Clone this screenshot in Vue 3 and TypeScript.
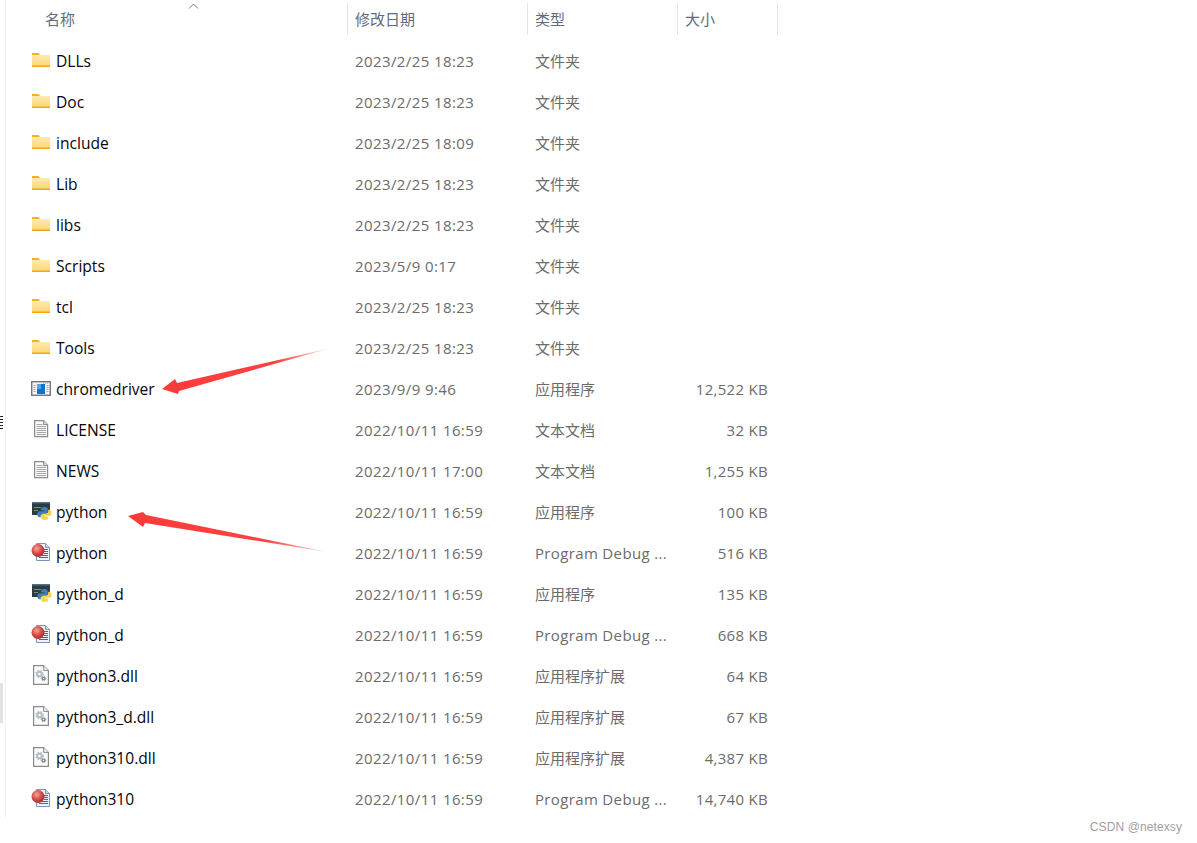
<script setup lang="ts">
type Kind = 'folder' | 'exe' | 'text' | 'py' | 'pdb' | 'dll'
interface Row { name: string; date: string; type: string; size: string; kind: Kind }

const folder = '文件夹'
const app = '应用程序'
const doc = '文本文档'
const pdb = 'Program Debug ...'
const ext = '应用程序扩展'

const rows: Row[] = [
  { name: 'DLLs', date: '2023/2/25 18:23', type: folder, size: '', kind: 'folder' },
  { name: 'Doc', date: '2023/2/25 18:23', type: folder, size: '', kind: 'folder' },
  { name: 'include', date: '2023/2/25 18:09', type: folder, size: '', kind: 'folder' },
  { name: 'Lib', date: '2023/2/25 18:23', type: folder, size: '', kind: 'folder' },
  { name: 'libs', date: '2023/2/25 18:23', type: folder, size: '', kind: 'folder' },
  { name: 'Scripts', date: '2023/5/9 0:17', type: folder, size: '', kind: 'folder' },
  { name: 'tcl', date: '2023/2/25 18:23', type: folder, size: '', kind: 'folder' },
  { name: 'Tools', date: '2023/2/25 18:23', type: folder, size: '', kind: 'folder' },
  { name: 'chromedriver', date: '2023/9/9 9:46', type: app, size: '12,522 KB', kind: 'exe' },
  { name: 'LICENSE', date: '2022/10/11 16:59', type: doc, size: '32 KB', kind: 'text' },
  { name: 'NEWS', date: '2022/10/11 17:00', type: doc, size: '1,255 KB', kind: 'text' },
  { name: 'python', date: '2022/10/11 16:59', type: app, size: '100 KB', kind: 'py' },
  { name: 'python', date: '2022/10/11 16:59', type: pdb, size: '516 KB', kind: 'pdb' },
  { name: 'python_d', date: '2022/10/11 16:59', type: app, size: '135 KB', kind: 'py' },
  { name: 'python_d', date: '2022/10/11 16:59', type: pdb, size: '668 KB', kind: 'pdb' },
  { name: 'python3.dll', date: '2022/10/11 16:59', type: ext, size: '64 KB', kind: 'dll' },
  { name: 'python3_d.dll', date: '2022/10/11 16:59', type: ext, size: '67 KB', kind: 'dll' },
  { name: 'python310.dll', date: '2022/10/11 16:59', type: ext, size: '4,387 KB', kind: 'dll' },
  { name: 'python310', date: '2022/10/11 16:59', type: pdb, size: '14,740 KB', kind: 'pdb' },
]
</script>

<template>
  <div class="page">
    <svg width="0" height="0" class="defs">
      <defs>
        <linearGradient id="fold" x1="0" y1="0" x2="0" y2="1">
          <stop offset="0" stop-color="#ffeab0" />
          <stop offset="1" stop-color="#fcd66f" />
        </linearGradient>
        <radialGradient id="ball" cx="0.4" cy="0.35" r="0.7">
          <stop offset="0" stop-color="#f2a59c" />
          <stop offset="0.55" stop-color="#d64a44" />
          <stop offset="1" stop-color="#a32a26" />
        </radialGradient>
        <linearGradient id="a1" x1="162" y1="389" x2="327" y2="349" gradientUnits="userSpaceOnUse">
          <stop offset="0" stop-color="#fb3a3a" />
          <stop offset="0.7" stop-color="#fb4343" />
          <stop offset="1" stop-color="#fdd0d0" />
        </linearGradient>
        <linearGradient id="a2" x1="128" y1="516" x2="327" y2="552" gradientUnits="userSpaceOnUse">
          <stop offset="0" stop-color="#fb3a3a" />
          <stop offset="0.7" stop-color="#fb4343" />
          <stop offset="1" stop-color="#fdd0d0" />
        </linearGradient>
      </defs>
    </svg>

    <div class="pane">
      <div class="head">
        <div class="hcell hname">名称
          <svg class="sort" width="11" height="6" viewBox="0 0 11 6"><path d="M1 5.5 L5.5 1 L10 5.5" fill="none" stroke="#7a7a7a" stroke-width="1" /></svg>
        </div>
        <div class="hcell hdate">修改日期</div>
        <div class="hcell htype">类型</div>
        <div class="hcell hsize">大小</div>
      </div>

      <div v-for="(r, i) in rows" :key="i" class="row">
        <div class="name">
          <svg class="icon" width="22" height="22" viewBox="0 0 22 22">
            <template v-if="r.kind === 'folder'">
              <path d="M2 4 h6.500 l1.500 2 h-8 z" fill="#f6b01a" />
              <rect x="2" y="6" width="18" height="12" fill="url(#fold)" />
              <rect x="2" y="16.500" width="18" height="1.500" fill="#efa918" />
            </template>
            <template v-else-if="r.kind === 'exe'">
              <rect x="1.700" y="4.700" width="18.600" height="13.600" fill="#f4f4f4" stroke="#767676" stroke-width="1.400" />
              <path d="M13 6 h6" stroke="#9a9a9a" stroke-width="1" stroke-dasharray="1 1" />
              <rect x="7" y="7" width="8" height="10" fill="#0c74cf" />
              <rect x="7" y="7" width="4" height="5" fill="#4aa8ee" />
              <path d="M3.500 8.500 h2 M3.500 10.500 h2 M3.500 12.500 h2 M3.500 14.500 h2 M16.500 8.500 h2 M16.500 10.500 h2 M16.500 12.500 h2 M16.500 14.500 h2" stroke="#a0a0a0" stroke-width="1" />
            </template>
            <template v-else-if="r.kind === 'text'">
              <path d="M4.600 2.600 h9 l4 4 v12 h-13 z" fill="#fafafa" stroke="#8a8a8a" stroke-width="1.200" />
              <path d="M13.600 2.600 v4 h4" fill="#dedede" stroke="#8a8a8a" />
              <path d="M6.500 6.500 h6 M6.500 8.500 h9.500 M6.500 10.500 h9.500 M6.500 12.500 h9.500 M6.500 14.500 h9.500 M6.500 16.500 h9.500" stroke="#a6a6a6" stroke-width="1" />
            </template>
            <template v-else-if="r.kind === 'py'">
              <rect x="2" y="2" width="18" height="13" fill="#2f3b43" />
              <rect x="2" y="2" width="18" height="1.500" fill="#4f7086" />
              <path d="M4 7.500 h7 M4 10.500 h4" stroke="#64a06c" stroke-width="1" />
              <path d="M14.500 7 c-3 0 -3.500 1 -3.500 2 v1.500 h3.500 v.7 h-5 c-1.500 0 -2.200 1.300 -2.200 3 s.9 3 2.200 3 h1.300 v-1.800 c0 -1.200 1 -2 2.200 -2 h3 c1 0 1.700 -.8 1.700 -1.700 v-2.700 c0 -1 -.8 -2 -3.200 -2 z" fill="#3f80ba" />
              <path d="M14.500 20 c3 0 3.500 -1 3.500 -2 v-1.500 h-3.500 v-.7 h5 c1.500 0 2.200 -1.300 2.200 -3 s-.9 -3 -2.200 -3 h-1.300 v1.800 c0 1.200 -1 2 -2.200 2 h-3 c-1 0 -1.700 .8 -1.700 1.700 v2.700 c0 1 .8 2 3.200 2 z" fill="#f7d54a" />
            </template>
            <template v-else-if="r.kind === 'pdb'">
              <path d="M6.500 2.500 h9 l4 4 v13 h-13 z" fill="#edf2fb" stroke="#7d93b8" />
              <path d="M15.500 2.500 v4 h4" fill="#cfdcf0" stroke="#7d93b8" />
              <path d="M12 8.500 h6 M14 10.500 h4 M14 12.500 h4 M9 14.500 h9 M9 16.500 h9" stroke="#3a69b3" stroke-width="1.200" />
              <circle cx="8" cy="9.500" r="6.500" fill="url(#ball)" />
            </template>
            <template v-else>
              <path d="M3.600 1.600 h10 l4.800 4.800 v14 h-14.800 z" fill="#fcfcfc" stroke="#8a8a8a" stroke-width="1.200" />
              <path d="M13.600 1.600 v4.800 h4.800" fill="#efefef" stroke="#8a8a8a" />
              <circle cx="9.500" cy="10" r="2.300" fill="none" stroke="#b4bcc3" stroke-width="2" />
              <circle cx="9.500" cy="10" r="3.700" fill="none" stroke="#b4bcc3" stroke-width="1.100" stroke-dasharray="1.500 1.500" />
              <circle cx="13.500" cy="14.500" r="1.300" fill="none" stroke="#7a7f83" stroke-width="1.100" />
              <circle cx="13.500" cy="14.500" r="2.300" fill="none" stroke="#7a7f83" stroke-width="0.900" stroke-dasharray="1 1" />
            </template>
          </svg>
          <span class="label">{{ r.name }}</span>
        </div>
        <div class="date">{{ r.date }}</div>
        <div class="type" :class="{ latin: r.kind === 'pdb' }">{{ r.type }}</div>
        <div class="size">{{ r.size }}</div>
      </div>
    </div>

    <svg class="arrows" width="1197" height="843" viewBox="0 0 1197 843">
      <path d="M162 389 L175 379 L177 383 L327 349 L179 391 L178 394 Z" fill="url(#a1)" />
      <path d="M128 516 L143 512 L146 515 L327 552 L145 523 L143 527 Z" fill="url(#a2)" />
    </svg>

    <div class="edge-mark"></div>
    <div class="edge-block"></div>
    <div class="watermark">CSDN @netexsy</div>
  </div>
</template>

<style scoped>
.page {
  position: relative;
  width: 1197px;
  height: 843px;
  overflow: hidden;
  background: #fff;
  font-family: "Open Sans", "Noto Sans CJK SC", sans-serif;
  font-size: 15px;
}
.defs {
  position: absolute;
}
.pane {
  margin-left: 5px;
  width: 800px;
  height: 818px;
  border-left: 1px solid #f0f0f0;
}
.head {
  display: grid;
  grid-template-columns: 342px 180px 150px 100px;
  height: 41px;
  padding-top: 3px;
  box-sizing: border-box;
}
.hcell {
  position: relative;
  height: 32px;
  line-height: 32px;
  padding-left: 7px;
  color: #5f6b7a;
  font-size: 15px;
  border-right: 1px solid #e5e5e5;
  box-sizing: border-box;
}
.hname {
  padding-left: 39px;
}
.sort {
  position: absolute;
  left: 182px;
  top: 0;
}
.row {
  display: grid;
  grid-template-columns: 342px 180px 150px 90px;
  height: 41px;
  align-items: center;
}
.name {
  display: flex;
  align-items: center;
  padding-left: 24px;
  color: #06060a;
  font-size: 15.6px;
}
.icon {
  flex: none;
  margin-right: 4px;
  margin-top: -3px;
}
.label {
  margin-top: -2px;
}
.date,
.type,
.size {
  color: #6b6b6b;
  font-size: 15px;
  margin-top: -2px;
}
.date {
  padding-left: 7px;
  letter-spacing: 0.4px;
}
.type {
  padding-left: 7px;
}
.type.latin {
  letter-spacing: 0.35px;
}
.size {
  text-align: right;
  letter-spacing: 0.3px;
}
.arrows {
  position: absolute;
  left: 0;
  top: 0;
  pointer-events: none;
}
.edge-mark {
  position: absolute;
  left: 0;
  top: 416px;
  width: 3px;
  height: 14px;
  background: repeating-linear-gradient(#222 0 1px, #fff 1px 3px);
}
.edge-block {
  position: absolute;
  left: 0;
  top: 683px;
  width: 3px;
  height: 40px;
  background: #e2e2e2;
}
.watermark {
  position: absolute;
  right: 15px;
  top: 819px;
  color: #a0a0a0;
  font-family: "Liberation Sans", sans-serif;
  font-size: 12px;
  letter-spacing: 0.1px;
  line-height: 16px;
}
</style>
